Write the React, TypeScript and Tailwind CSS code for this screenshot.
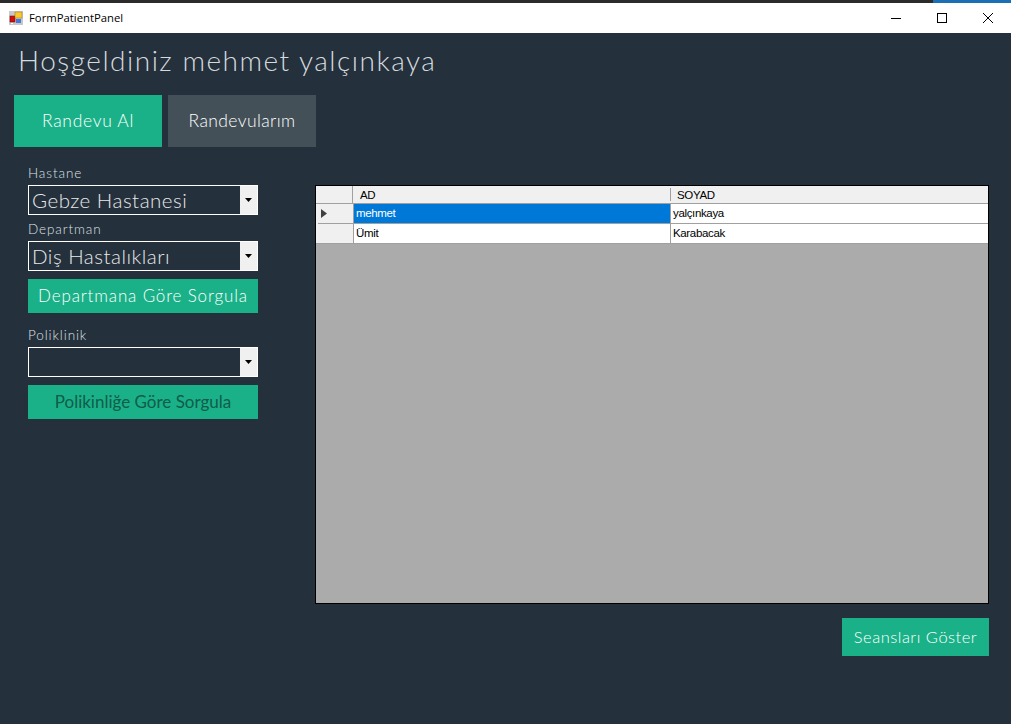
const font = "font-['Lato','Open_Sans',sans-serif] font-light";

function AppIcon() {
  return (
    <svg width="14" height="14" viewBox="0 0 14 14">
      <rect x="0" y="0" width="14" height="14" fill="#c8c8c8" />
      <rect x="1" y="5" width="5" height="6" fill="#d01010" stroke="#700" strokeWidth="0.5" />
      <rect x="6" y="1" width="7" height="6" fill="#f8c830" stroke="#a07010" strokeWidth="0.5" />
      <rect x="7" y="8" width="5" height="4" fill="#4878d8" />
      <rect x="2" y="12" width="2" height="1" fill="#fff" />
    </svg>
  );
}

function TitleBar() {
  return (
    <div className="h-[33px] shrink-0 flex flex-col">
      <div className="h-[3px] bg-[#2b2b2b] flex justify-end">
        <div className="w-[78px] bg-[#1c6fb5]" />
      </div>
      <div className="h-[30px] bg-white flex items-center pl-[9px]">
        <AppIcon />
        <span className="ml-[6px] text-[11.3px] font-normal text-black font-['Open_Sans',sans-serif]">FormPatientPanel</span>
        <div className="ml-auto flex items-center text-black">
          <svg width="12" height="12" viewBox="0 0 12 12" className="mr-[34px]">
            <path d="M1 6.5h10" stroke="#000" strokeWidth="1" />
          </svg>
          <svg width="12" height="12" viewBox="0 0 12 12" className="mr-[34px]">
            <rect x="1.5" y="1.5" width="9" height="9" fill="none" stroke="#000" strokeWidth="1" />
          </svg>
          <svg width="12" height="12" viewBox="0 0 12 12" className="mr-[17px]">
            <path d="M1 1l10 10M11 1L1 11" stroke="#000" strokeWidth="1" />
          </svg>
        </div>
      </div>
    </div>
  );
}

function Combo({ value }: { value: string }) {
  return (
    <div className="h-[30px] border border-white flex">
      <div className="flex-1 pl-[3px] text-[20.5px] leading-[28px] text-[#e8e8e8] tracking-[0.5px]">{value}</div>
      <div className="w-[17px] bg-[#f0f0f0] flex items-center justify-center">
        <svg width="7" height="4" viewBox="0 0 7 4">
          <path d="M0 0h7L3.5 4z" fill="#000" />
        </svg>
      </div>
    </div>
  );
}

function GreenButton({ label, dark }: { label: string; dark?: boolean }) {
  return (
    <div className={`h-[34px] bg-[#1ab188] flex items-center justify-center text-[17px] ${dark ? "text-[#0f5c4a] font-normal tracking-[0px]" : "text-white tracking-[0.85px]"}`}>
      {label}
    </div>
  );
}

function Field({ label }: { label: string }) {
  return <div className="text-[13.5px] leading-[18px] text-[#dfe2e4] tracking-[0.9px]">{label}</div>;
}

function Grid() {
  const rows = [
    { ad: "mehmet", soyad: "yalçınkaya", selected: true },
    { ad: "Ümit", soyad: "Karabacak", selected: false },
  ];
  return (
    <div className="h-[419px] bg-[#ababab] border border-black flex flex-col font-['Liberation_Sans',sans-serif] font-normal text-[11.5px] tracking-[-0.35px] text-black">
      <div className="h-[17px] bg-[#f0f0f0] flex border-b border-[#a0a0a0] box-content">
        <div className="w-[37px] border-r border-[#a0a0a0]" />
        <div className="w-[317px] flex items-center pl-[7px] pt-[2px]">AD</div>
        <div className="flex-1 border-l border-[#a0a0a0] flex items-center pl-[6px] my-[2px] pt-[2px]">SOYAD</div>
      </div>
      {rows.map((row) => (
        <div key={row.ad} className="h-[20px] flex bg-[#f0f0f0]">
          <div className="w-[38px] border-r border-[#a0a0a0] flex flex-col">
            <div className="flex-1 flex items-center pl-[5px]">
              {row.selected && (
                <svg width="6" height="9" viewBox="0 0 6 9">
                  <path d="M0 0l6 4.5L0 9z" fill="#404040" />
                </svg>
              )}
            </div>
            <div className={`h-px bg-[#a0a0a0] ${row.selected ? "ml-[2px]" : ""}`} />
          </div>
          <div className={`w-[317px] border-r border-b border-[#a0a0a0] flex items-center pl-[2px] pt-[1px] ${row.selected ? "bg-[#0078d7] text-white" : "bg-white"}`}>
            {row.ad}
          </div>
          <div className="flex-1 bg-white border-b border-[#a0a0a0] flex items-center pl-[2px] pt-[1px]">{row.soyad}</div>
        </div>
      ))}
    </div>
  );
}

export default function App() {
  return (
    <div className={`h-[724px] w-[1011px] overflow-hidden bg-[#24303c] flex flex-col ${font}`}>
      <TitleBar />

      <h1 className="mt-[10px] ml-[18px] h-[35px] text-[28px] leading-[34px] text-[#d5dade] tracking-[1.5px]">
        Hoşgeldiniz mehmet yalçınkaya
      </h1>

      <div className="mt-[17px] ml-[14px] flex gap-[6px]">
        <div className="w-[148px] h-[52px] bg-[#1ab188] flex items-center justify-center text-[17.5px] tracking-[0.7px] text-white">
          Randevu Al
        </div>
        <div className="w-[148px] h-[52px] bg-[#435058] flex items-center justify-center text-[17.5px] tracking-[0.4px] text-white">
          Randevularım
        </div>
      </div>

      <div className="flex mt-[18px]">
        <div className="ml-[28px] w-[230px] flex flex-col">
          <div className="-mt-[1px]"><Field label="Hastane" /></div>
          <div className="mt-[3px]"><Combo value="Gebze Hastanesi" /></div>
          <div className="mt-[5px]"><Field label="Departman" /></div>
          <div className="mt-[3px]"><Combo value="Diş Hastalıkları" /></div>
          <div className="mt-[8px]"><GreenButton label="Departmana Göre Sorgula" /></div>
          <div className="mt-[13px]"><Field label="Poliklinik" /></div>
          <div className="mt-[3px]"><Combo value="" /></div>
          <div className="mt-[8px]"><GreenButton label="Polikinliğe Göre Sorgula" dark /></div>
        </div>

        <div className="ml-[57px] mt-[20px] w-[674px] flex flex-col">
          <Grid />
          <div className="mt-[14px] flex justify-end">
            <div className="w-[147px] h-[38px] bg-[#1ab188] flex items-center justify-center text-[16.5px] tracking-[0.5px] text-white">
              Seansları Göster
            </div>
          </div>
        </div>
      </div>
    </div>
  );
}
